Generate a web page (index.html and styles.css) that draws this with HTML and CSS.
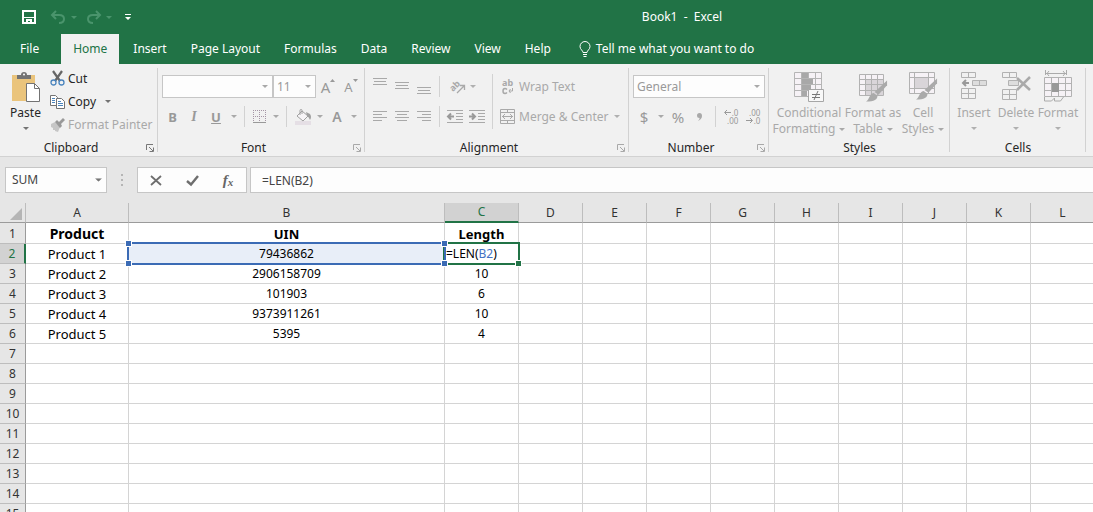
FILE: index.html
```
<!DOCTYPE html>
<html lang="en">
<head>
<meta charset="utf-8">
<title>Book1 - Excel</title>
<link rel="stylesheet" href="styles.css">
</head>
<body>
<svg class="defs" aria-hidden="true">
  <symbol id="arrow" viewBox="0 0 6 3"><path d="M0 0h6L3 3z" fill="currentColor"/></symbol>
  <symbol id="launch" viewBox="0 0 8 8"><path d="M.5 6V.5H7M3 3l4 4M7.500 3.500v4h-4" fill="none" stroke="currentColor"/></symbol>
  <symbol id="brush" viewBox="0 0 24 24"><path d="M23 1v5l-9 10-4-3z" fill="currentColor"/><path d="M9 14l4 3c0 4-3 6-12 6 4-2 3-8 8-9z" fill="currentColor"/></symbol>
</svg>

<header class="titlebar">
  <div class="quick">
    <button class="save" aria-label="Save"><svg width="14" height="14"><path d="M1 1h12v12H1z" fill="none" stroke="#fff" stroke-width="2"/><path d="M2 7h10v1H2zM4 9h6v5H8v-3H6v3H4z" fill="#fff"/></svg></button>
    <button class="dim undo" aria-label="Undo"><svg width="15" height="14"><path d="M6 1L2 5l4 4M2 5h7q5 0 5 4t-5 4" fill="none" stroke="currentColor" stroke-width="2"/></svg></button>
    <button class="dim" aria-label="Undo history"><svg width="6" height="3"><use href="#arrow"/></svg></button>
    <button class="dim redo" aria-label="Redo"><svg width="15" height="14"><path d="M9 1l4 4-4 4M13 5H6Q1 5 1 9t5 4" fill="none" stroke="currentColor" stroke-width="2"/></svg></button>
    <button class="dim" aria-label="Redo history"><svg width="6" height="3"><use href="#arrow"/></svg></button>
    <button class="custom" aria-label="Customize toolbar"><svg width="6" height="7"><path d="M0 0h6v1H0zM0 3h6L3 6z" fill="#fff"/></svg></button>
  </div>
  <h1>Book1&nbsp; -&nbsp; Excel</h1>
</header>

<nav class="tabs">
  <a class="file" href="#file">File</a>
  <a class="active" href="#home">Home</a>
  <a href="#insert">Insert</a>
  <a href="#layout">Page Layout</a>
  <a href="#formulas">Formulas</a>
  <a href="#data">Data</a>
  <a href="#review">Review</a>
  <a href="#view">View</a>
  <a href="#help">Help</a>
  <button class="tell"><svg width="12" height="16"><path d="M4 11.500c0-2-3-3-3-6a5 5 0 0 1 10 0c0 3-3 4-3 6zM4 13.500h4M4.500 15.500h3" fill="none" stroke="#fff"/></svg>Tell me what you want to do</button>
</nav>

<main class="ribbon">
  <section class="group clipboard">
    <div class="body">
      <button class="big paste"><svg width="28" height="31"><path d="M0 3h23v26H0z" fill="#eac47c"/><path d="M5 7V3h4q0-3 3-3t3 3h4v4z" fill="#737373"/><circle cx="12" cy="2.500" r="1" fill="#fff"/><path d="M14.500 11.500h8l5 5v13h-13z" fill="#fff" stroke="#737373"/><path d="M22.500 11.500v5h5" fill="none" stroke="#737373"/></svg><span>Paste</span><svg class="drop" width="6" height="3"><use href="#arrow"/></svg></button>
      <div class="stack">
        <button><svg width="15" height="15"><path d="M3 0l7 10M12 0L5 10" stroke="#666" stroke-width="2.200"/><circle cx="3.500" cy="11.500" r="2.500" fill="none" stroke="#4a84bd" stroke-width="1.300"/><circle cx="11.500" cy="11.500" r="2.500" fill="none" stroke="#4a84bd" stroke-width="1.300"/></svg>Cut</button>
        <button><svg width="15" height="14"><path d="M.5.5h5l2 2v8h-7z" fill="#fff" stroke="#737373"/><path d="M6.500 3.500h5l3 3v7h-8z" fill="#fff" stroke="#737373"/><path d="M2 3.500h3M2 5.500h3M2 7.500h3M8 6.500h3M8 8.500h5M8 10.500h5" stroke="#4a84bd"/></svg>Copy<svg class="drop" width="6" height="3"><use href="#arrow"/></svg></button>
        <button class="off"><svg width="15" height="14"><path d="M1 6l4-2 5 5-2 5-3-1 0-1-2 0 0-2-2-1z" fill="#c6c6c6"/><path d="M5 4l2-2 2 2 4-4 2 2-4 4 1 2-2 2z" fill="#999"/></svg>Format Painter</button>
      </div>
    </div>
    <footer><h2>Clipboard</h2><button aria-label="Clipboard settings"><svg width="8" height="8"><use href="#launch"/></svg></button></footer>
  </section>

  <section class="group font off">
    <div class="body rows">
      <div class="row font-pick">
        <span class="combo"><select aria-label="Font"><option></option></select><svg width="6" height="3"><use href="#arrow"/></svg></span>
        <span class="combo"><select aria-label="Font size"><option>11</option></select><svg width="6" height="3"><use href="#arrow"/></svg></span>
        <button class="grow" aria-label="Increase font size">A<svg width="5" height="3"><path d="M0 3h5L2.500 0z" fill="currentColor"/></svg></button>
        <button class="shrink" aria-label="Decrease font size">A<svg width="5" height="3"><path d="M0 0h5L2.500 3z" fill="currentColor"/></svg></button>
      </div>
      <div class="row font-tools">
        <button class="glyph"><b>B</b></button>
        <button class="glyph ital">I</button>
        <button class="glyph under"><b>U</b></button>
        <button aria-label="Underline style"><svg width="6" height="3"><use href="#arrow"/></svg></button>
        <i class="sep"></i>
        <button aria-label="Borders"><svg width="13" height="13"><path d="M0 .5h13M0 6.500h13M.5 0v12M6.500 0v12M12.500 0v12" stroke="#a595a5" stroke-dasharray="1 1"/><path d="M0 12.500h13" stroke="#999"/></svg></button>
        <button aria-label="Border style"><svg width="6" height="3"><use href="#arrow"/></svg></button>
        <i class="sep"></i>
        <button aria-label="Fill color"><svg width="16" height="16"><path d="M0 12h16v4H0z" fill="#e5dfe5"/><path d="M7 2l6 5-5 5-6-5zM5 6V1.500Q5 .5 6 .5t1 1V5" fill="#f7f5f7" stroke="#a0a0a0"/><path d="M11 3l4 2q2 3 0 6-1-3-3-4z" fill="#a0a0a0"/></svg></button>
        <button aria-label="Fill color list"><svg width="6" height="3"><use href="#arrow"/></svg></button>
        <button class="glyph color-a">A</button>
        <button aria-label="Font color list"><svg width="6" height="3"><use href="#arrow"/></svg></button>
      </div>
    </div>
    <footer><h2>Font</h2><button aria-label="Font settings"><svg width="8" height="8"><use href="#launch"/></svg></button></footer>
  </section>

  <section class="group alignment off">
    <div class="body align-grid">
      <button aria-label="Top align"><svg width="14" height="20"><path d="M0 1.500h14M1 4.500h12M0 7.500h14" stroke="currentColor"/></svg></button>
      <button aria-label="Middle align"><svg width="14" height="20"><path d="M0 5.500h14M1 8.500h12M0 11.500h14" stroke="currentColor"/></svg></button>
      <button aria-label="Bottom align"><svg width="14" height="20"><path d="M0 10.500h14M1 13.500h12M0 16.500h14" stroke="currentColor"/></svg></button>
      <i class="sep"></i>
      <button class="orient" aria-label="Orientation"><svg width="17" height="16"><text class="tiny" x="4" y="13" transform="rotate(-45 4 13)">ab</text><path d="M8 14l7-7M11 6.500h4.500V11" fill="none" stroke="currentColor" stroke-width="1.300"/></svg><svg class="drop" width="6" height="3"><use href="#arrow"/></svg></button>
      <i class="sep tall"></i>
      <button class="label"><svg width="16" height="16"><text class="tiny" x="2" y="7">ab</text><path d="M7 10.500Q6 9.500 5 9.500 3 9.500 3 12t2 2.500q1 0 2-1" fill="none" stroke="currentColor" stroke-width="1.500"/><path d="M12.500 9v3H9M10.500 10L9 12l1.500 2" fill="none" stroke="currentColor"/></svg>Wrap Text</button>
      <button aria-label="Align left"><svg width="14" height="12"><path d="M0 .5h14M0 3.500h9M0 6.500h14M0 9.500h9" stroke="currentColor"/></svg></button>
      <button aria-label="Center"><svg width="14" height="12"><path d="M0 .5h14M2 3.500h10M0 6.500h14M2 9.500h10" stroke="currentColor"/></svg></button>
      <button aria-label="Align right"><svg width="14" height="12"><path d="M0 .5h14M5 3.500h9M0 6.500h14M5 9.500h9" stroke="currentColor"/></svg></button>
      <i class="sep"></i>
      <button aria-label="Decrease indent"><svg width="16" height="13"><path d="M0 .5h16M9 3.500h7M9 6.500h7M9 9.500h7M0 12.500h16" stroke="currentColor"/><path d="M7 6.500H1M4 3.500l-3 3 3 3" fill="none" stroke="#999" stroke-width="2"/></svg></button>
      <button aria-label="Increase indent"><svg width="16" height="13"><path d="M0 .5h16M9 3.500h7M9 6.500h7M9 9.500h7M0 12.500h16" stroke="currentColor"/><path d="M0 6.500h6M3 3.500l3 3-3 3" fill="none" stroke="#999" stroke-width="2"/></svg></button>
      <button class="label"><svg width="16" height="15"><path d="M.5.500h14v14H.5zM.5 3.500h14M.5 11.500h14M7.500.5v3M7.500 11.500v3M2 7.500h11M5 5L2.500 7.500 5 10M10 5l2.500 2.500L10 10" fill="none" stroke="currentColor"/></svg>Merge &amp; Center<svg class="drop" width="6" height="3"><use href="#arrow"/></svg></button>
    </div>
    <footer><h2>Alignment</h2><button aria-label="Alignment settings"><svg width="8" height="8"><use href="#launch"/></svg></button></footer>
  </section>

  <section class="group number off">
    <div class="body rows">
      <span class="combo"><select aria-label="Number format"><option>General</option></select><svg width="6" height="3"><use href="#arrow"/></svg></span>
      <div class="row number-tools">
        <button class="sign">$</button>
        <button aria-label="Currency list"><svg width="6" height="3"><use href="#arrow"/></svg></button>
        <button class="sign">%</button>
        <button aria-label="Comma style"><svg width="5" height="8"><path d="M2.500 0Q5 0 5 3 5 6 1 8 3 6 2.500 5 0 5 0 2.500 0 0 2.500 0z" fill="currentColor"/></svg></button>
        <i class="sep"></i>
        <button class="decimals" aria-label="Increase decimal"><span><svg width="7" height="5"><path d="M7 2.500H1M3 0L.5 2.500 3 5" fill="none" stroke="currentColor"/></svg>.0</span><span>.00</span></button>
        <button class="decimals" aria-label="Decrease decimal"><span>.00</span><span><svg width="7" height="5"><path d="M0 2.500h6M4 0l2.500 2.500L4 5" fill="none" stroke="currentColor"/></svg>.0</span></button>
      </div>
    </div>
    <footer><h2>Number</h2><button aria-label="Number settings"><svg width="8" height="8"><use href="#launch"/></svg></button></footer>
  </section>

  <section class="group styles off">
    <div class="body">
      <button class="big"><svg width="30" height="31"><path d="M.5.500h27v24H.5z" fill="#f6f2f6" stroke="#b5b5b5"/><path d="M7.500 0v25M21.500 0v25M0 6.500h28M0 12.500h28M0 18.500h28M14.500 0v25" stroke="#b5b5b5"/><path d="M8 1h6v5H8zM8 7h11v5H8zM8 13h9v5H8zM8 19h5v5H8z" fill="#a8a8a8"/><path d="M14.500 17.500h15v12h-15z" fill="#f8f8f8" stroke="#a6a6a6"/><path d="M18 22.500h8M18 25.500h8M24 19l-4 9" stroke="#777"/></svg><span>Conditional</span><span>Formatting<svg width="6" height="3"><use href="#arrow"/></svg></span></button>
      <button class="big"><svg width="30" height="31"><path d="M1.500 2.500h24v21h-24z" fill="#f6f2f6"/><path d="M8 8h17v15H8z" fill="#d9d5d9"/><path d="M1.500 2.500h24v21h-24zM7.500 2v22M13.500 2v22M19.500 2v22M1 7.500h25M1 12.500h25M1 18.500h25" fill="none" stroke="#b2b2b2"/><svg x="7" y="7" width="23" height="24" color="#aaa"><use href="#brush"/></svg></svg><span>Format as</span><span>Table<svg width="6" height="3"><use href="#arrow"/></svg></span></button>
      <button class="big"><svg width="30" height="31"><path d="M1.500.500h25v21h-25z" fill="#f6f2f6"/><path d="M6 5h14v12H6z" fill="#d9d5d9"/><path d="M1.500.500h25v21h-25zM6.500 0v22M20.500 0v22M1 5.500h26M1 16.500h26" fill="none" stroke="#b2b2b2"/><svg x="7" y="5" width="23" height="24" color="#aaa"><use href="#brush"/></svg></svg><span>Cell</span><span>Styles<svg width="6" height="3"><use href="#arrow"/></svg></span></button>
    </div>
    <footer><h2>Styles</h2></footer>
  </section>

  <section class="group cells off">
    <div class="body">
      <button class="big"><svg width="28" height="31"><path d="M1.500.500h14v5h-14zM8.500.5v5M1.500 16.500h14v10h-14zM8.500 16.500v10M1.500 21.500h14" fill="none" stroke="#b2b2b2"/><path d="M12.500 8.500h14v5h-14zM19.500 8.500v5" fill="#ddd" stroke="#b2b2b2"/><path d="M9 11H3M6 8l-3 3 3 3" fill="none" stroke="#999" stroke-width="2"/></svg><span>Insert</span><svg class="drop" width="6" height="3"><use href="#arrow"/></svg></button>
      <button class="big"><svg width="29" height="31"><path d="M.5.500h14v5H.5zM7.500.5v5M.5 17.500h14v10H.5zM7.500 17.500v10M.5 22.500h14" fill="none" stroke="#b2b2b2"/><path d="M6.500 8.500h10v5h-10z" fill="#ddd" stroke="#b2b2b2"/><path d="M15 6l13 12M28 5L15 18" stroke="#aaa" stroke-width="2.500"/></svg><span>Delete</span><svg class="drop" width="6" height="3"><use href="#arrow"/></svg></button>
      <button class="big"><svg width="29" height="31"><path d="M.5 5.500h27v19H.5z" fill="#f6f2f6"/><path d="M.5 5.500h27v19H.5zM7.500 5v20M14.500 5v20M21.500 5v20M0 11.500h28M0 18.500h28" fill="none" stroke="#b2b2b2"/><path d="M8 11h7v9H8z" fill="#999"/><path d="M1.500-2v5M22.500-2v5M2 1.500h20M5-1L3 1.500 5 4M19-1l2 2.500L19 4M.5 25v4h7l3-3v3h6l3-4" fill="none" stroke="#aaa"/></svg><span>Format</span><svg class="drop" width="6" height="3"><use href="#arrow"/></svg></button>
    </div>
    <footer><h2>Cells</h2></footer>
  </section>
</main>

<div class="formula-bar">
  <span class="combo name-box"><select aria-label="Name box"><option>SUM</option></select><svg width="7" height="4" viewBox="0 0 6 3"><use href="#arrow"/></svg></span>
  <svg class="dots" width="2" height="12"><path d="M0 0h2v2H0zM0 5h2v2H0zM0 10h2v2H0z" fill="#b5b5b5"/></svg>
  <div class="entry">
    <button aria-label="Cancel"><svg width="12" height="11"><path d="M1 1l10 9M11 1L1 10" stroke="#6e6e6e" stroke-width="1.800"/></svg></button>
    <button aria-label="Enter"><svg width="13" height="11"><path d="M1 6l4 3.500L12 1" fill="none" stroke="#6e6e6e" stroke-width="2.400"/></svg></button>
    <button class="fx" aria-label="Insert function">f<small>x</small></button>
  </div>
  <input class="formula" aria-label="Formula" value="=LEN(B2)">
</div>

<div class="sheet">
  <table>
    <colgroup><col class="c-num"><col class="c-a"><col class="c-b"><col class="c-c"><col><col><col><col><col><col><col><col><col></colgroup>
    <thead><tr><th class="corner"><svg width="12" height="12"><path d="M12 0v12H0z" fill="#b5b5b5"/></svg></th><th>A</th><th>B</th><th class="on">C</th><th>D</th><th>E</th><th>F</th><th>G</th><th>H</th><th>I</th><th>J</th><th>K</th><th>L</th></tr></thead>
    <tbody>
      <tr class="titles"><th>1</th><td>Product</td><td>UIN</td><td>Length</td><td></td><td></td><td></td><td></td><td></td><td></td><td></td><td></td><td></td></tr>
      <tr><th class="on">2</th><td>Product 1</td><td class="ref">79436862<span class="outline"><i></i><i></i><i></i><i></i></span></td><td class="edit">=LEN(<em>B2</em>)<span class="outline"><i></i></span></td><td></td><td></td><td></td><td></td><td></td><td></td><td></td><td></td><td></td></tr>
      <tr><th>3</th><td>Product 2</td><td>2906158709</td><td>10</td><td></td><td></td><td></td><td></td><td></td><td></td><td></td><td></td><td></td></tr>
      <tr><th>4</th><td>Product 3</td><td>101903</td><td>6</td><td></td><td></td><td></td><td></td><td></td><td></td><td></td><td></td><td></td></tr>
      <tr><th>5</th><td>Product 4</td><td>9373911261</td><td>10</td><td></td><td></td><td></td><td></td><td></td><td></td><td></td><td></td><td></td></tr>
      <tr><th>6</th><td>Product 5</td><td>5395</td><td>4</td><td></td><td></td><td></td><td></td><td></td><td></td><td></td><td></td><td></td></tr>
      <tr><th>7</th><td></td><td></td><td></td><td></td><td></td><td></td><td></td><td></td><td></td><td></td><td></td><td></td></tr>
      <tr><th>8</th><td></td><td></td><td></td><td></td><td></td><td></td><td></td><td></td><td></td><td></td><td></td><td></td></tr>
      <tr><th>9</th><td></td><td></td><td></td><td></td><td></td><td></td><td></td><td></td><td></td><td></td><td></td><td></td></tr>
      <tr><th>10</th><td></td><td></td><td></td><td></td><td></td><td></td><td></td><td></td><td></td><td></td><td></td><td></td></tr>
      <tr><th>11</th><td></td><td></td><td></td><td></td><td></td><td></td><td></td><td></td><td></td><td></td><td></td><td></td></tr>
      <tr><th>12</th><td></td><td></td><td></td><td></td><td></td><td></td><td></td><td></td><td></td><td></td><td></td><td></td></tr>
      <tr><th>13</th><td></td><td></td><td></td><td></td><td></td><td></td><td></td><td></td><td></td><td></td><td></td><td></td></tr>
      <tr><th>14</th><td></td><td></td><td></td><td></td><td></td><td></td><td></td><td></td><td></td><td></td><td></td><td></td></tr>
      <tr><th>15</th><td></td><td></td><td></td><td></td><td></td><td></td><td></td><td></td><td></td><td></td><td></td><td></td></tr>
    </tbody>
  </table>
</div>
</body>
</html>
```
FILE: styles.css
```
* { box-sizing: border-box; }
body {
  margin: 0;
  height: 100vh;
  display: flex;
  flex-direction: column;
  overflow: hidden;
  background: #e6e6e6;
  color: #262626;
  font: 12px/16px "Noto Sans", "Open Sans", sans-serif;
}
.defs { position: absolute; width: 0; height: 0; }
button, select, input { font: inherit; color: inherit; }
button {
  display: flex;
  align-items: center;
  justify-content: center;
  margin: 0;
  padding: 0;
  border: 0;
  background: none;
  white-space: nowrap;
}
svg { display: block; flex: none; overflow: visible; }
h1, h2 { margin: 0; font-size: 12px; font-weight: 400; }

/* title bar */
.titlebar { display: flex; flex: none; align-items: center; height: 34px; background: #217346; color: #fff; }
.quick { display: flex; align-items: center; flex: 0 0 271px; padding-left: 22px; }
.dim { color: #4a946c; }
.undo { margin: 0 6px 0 14px; }
.redo { margin: 0 4px 0 10px; }
.custom { margin-left: 13px; }
h1 { flex: 1; text-align: center; }

/* tabs */
.tabs { display: flex; flex: none; height: 30px; background: #217346; color: #fff; }
.tabs a { padding: 0 12px; color: inherit; line-height: 30px; text-decoration: none; white-space: nowrap; }
.tabs .file { padding: 0 22px 0 20px; }
.tabs .active { margin-right: 2px; background: #f1f1f1; color: #217346; }
.tell { gap: 5px; margin-left: 16px; }

/* ribbon */
.ribbon { display: flex; flex: none; height: 93px; padding-top: 3px; border-bottom: 1px solid #d2d2d2; background: #f1f1f1; }
.group { position: relative; display: flex; flex-direction: column; flex: none; }
.group::after { content: ""; position: absolute; right: 0; top: 1px; bottom: 4px; width: 1px; background: #d2d2d2; }
.clipboard { width: 158px; }
.font { width: 207px; }
.alignment { width: 264px; }
.number { width: 140px; }
.styles { width: 181px; }
.cells { width: 136px; }
.body { display: flex; height: 72px; padding: 0 4px; }
.group footer { display: flex; align-items: center; height: 17px; color: #262626; }
.group footer h2 { flex: 1; text-align: center; }
.group footer button { width: 16px; color: #777; }
.off, .group.off footer button { color: #a9a9a9; }
.big { flex-direction: column; justify-content: flex-start; padding-top: 5px; }
.big > svg:first-child { margin-bottom: 2px; }
.big span { display: flex; align-items: center; gap: 4px; }
.big .drop { margin-top: 6px; }
.drop { color: #737373; }
.off .drop { color: #b0b0b0; }
.paste { width: 43px; }
.stack { display: flex; flex-direction: column; padding-left: 3px; }
.stack button { justify-content: flex-start; gap: 3px; height: 23px; }
.stack .drop { margin-left: 6px; }
.rows { flex-direction: column; gap: 7px; padding-top: 8px; }
.row { display: grid; height: 23px; align-items: center; }
.sep { width: 1px; height: 21px; justify-self: center; align-self: center; background: #d2d2d2; }
.combo { display: grid; align-items: center; height: 23px; color: #999; }
.combo select {
  grid-area: 1 / 1;
  width: 100%;
  height: 100%;
  padding: 0 3px;
  border: 1px solid #c6c6c6;
  border-radius: 0;
  background: #fdfdfd;
  appearance: none;
  opacity: 1;
}
.combo > svg { grid-area: 1 / 1; justify-self: end; margin-right: 5px; z-index: 1; color: #a9a9a9; }
.font-pick { grid-template-columns: 111px 43px 24px 22px; }
.font-tools { grid-template-columns: 21px 22px 22px 14px 6px 24px 10px 11px 22px 12px 22px 12px; }
.glyph { font-size: 13px; color: #999; }
.ital { font: italic bold 14px "Liberation Serif", serif; }
.under { text-decoration: underline; }
.color-a { font-size: 14px; font-weight: 600; }
.grow, .shrink { align-items: flex-start; color: #999; }
.grow { font-size: 15px; }
.shrink { font-size: 13px; }
.align-grid {
  display: grid;
  grid-template-columns: 22px 22px 22px 8px 24px 20px 10px 1fr;
  grid-template-rows: 23px 23px;
  row-gap: 7px;
  padding-top: 8px;
}
.orient { grid-column: span 2; gap: 4px; padding-right: 6px; }
.tall { grid-area: 1 / 7 / span 2; height: 55px; }
.label { justify-content: flex-start; gap: 3px; padding-left: 3px; }
.label .drop { margin-left: 2px; }
.tiny { font: bold 9px "Noto Sans", sans-serif; fill: currentColor; }
.decimals { flex-direction: column; align-items: flex-end; justify-self: center; font-size: 8px; line-height: 8px; color: #999; }
.decimals span { display: flex; align-items: center; gap: 1px; }
.number-tools { grid-template-columns: 22px 11px 24px 19px 12px 20px 24px; }
.sign { font-size: 15px; color: #999; }
.styles .body { display: grid; grid-template-columns: 68px 60px 40px; padding-left: 6px; }
.cells .body { display: grid; grid-template-columns: 42px 42px 42px; padding-left: 3px; }

/* formula bar */
.formula-bar { display: flex; flex: none; align-items: center; height: 46px; padding-left: 5px; }
.name-box { width: 102px; height: 26px; color: #444; }
.name-box select { padding: 0 6px; }
.name-box > svg { color: #777; }
.dots { margin: 0 14px; }
.entry { display: grid; grid-template-columns: 36px 36px 36px; width: 110px; height: 26px; border: 1px solid #c6c6c6; background: #fdfdfd; }
.fx { color: #666; font: italic bold 15px "Liberation Serif", serif; }
.fx small { padding-top: 4px; font-size: 11px; }
.formula { flex: 1; min-width: 0; height: 26px; margin-left: 3px; padding: 0 11px; border: 1px solid #c6c6c6; border-right: 0; background: #fdfdfd; color: #444; }

/* sheet */
.sheet { flex: 1; min-height: 0; overflow: hidden; }
table { width: 1095px; table-layout: fixed; border-spacing: 0; color: #000; }
col { width: 64px; }
.c-num { width: 26px; }
.c-a { width: 103px; }
.c-b { width: 316px; }
.c-c { width: 74px; }
th, td { position: relative; height: 20px; padding: 1px 0 0; border: 0 solid #d4d4d4; border-width: 0 1px 1px 0; line-height: 18px; text-align: center; white-space: nowrap; }
td { background: #fff; }
td:nth-child(2) { font-size: 13px; }
th { background: #e6e6e6; color: #333; font-weight: 400; border-color: #bdbdbd; }
thead th { padding: 0; border-bottom-color: #9b9b9b; }
tbody th { border-right-color: #9b9b9b; }
.titles > * { height: 21px; padding-top: 2px; }
.titles td { font-size: 13px; font-weight: 700; }
.titles td:nth-child(2) { font-size: 14px; }
.corner svg { margin: 2px 0 0 10px; }
.on { background: #d2d2d2; color: #217346; }
thead .on { border-bottom: 2px solid #217346; }
tbody .on { border-right: 2px solid #217346; }
.ref { background: #e8eef8; }
.edit { padding-left: 1px; text-align: left; }
.edit em { color: #4472c4; font-style: normal; }
.outline { position: absolute; inset: -2px; border: 2px solid #3b6bb5; z-index: 1; }
.edit .outline { border-color: #217346; }
.ref .outline { z-index: 3; }
.outline i { position: absolute; width: 7px; height: 7px; border: 1px solid #fff; background: #3b6bb5; }
.outline i:nth-child(1) { right: -4px; bottom: -4px; }
.outline i:nth-child(2) { left: -4px; bottom: -4px; }
.outline i:nth-child(3) { left: -4px; top: -4px; }
.outline i:nth-child(4) { right: -4px; top: -4px; }
.edit .outline i { background: #217346; }
```
